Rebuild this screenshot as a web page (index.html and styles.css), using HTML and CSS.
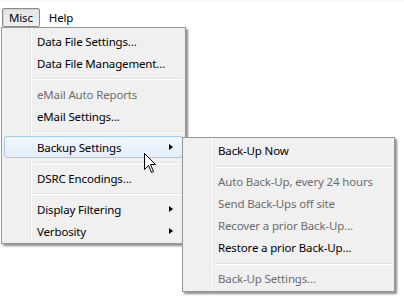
FILE: index.html
```html
<!DOCTYPE html>
<html>
<head>
<meta charset="utf-8">
<link rel="stylesheet" href="styles.css">
</head>
<body>
<div class="menubar">
  <span class="mb-item mb-open">Misc</span>
  <span class="mb-item">Help</span>
</div>

<div class="menu main-menu">
  <div class="item">Data File Settings...</div>
  <div class="item">Data File Management...</div>
  <div class="sep"></div>
  <div class="item disabled">eMail Auto Reports</div>
  <div class="item">eMail Settings...</div>
  <div class="sep"></div>
  <div class="item hot sub">Backup Settings</div>
  <div class="sep"></div>
  <div class="item">DSRC Encodings...</div>
  <div class="sep"></div>
  <div class="item sub">Display Filtering</div>
  <div class="item sub">Verbosity</div>
</div>

<div class="menu sub-menu">
  <div class="item">Back-Up Now</div>
  <div class="sep"></div>
  <div class="item disabled">Auto Back-Up, every 24 hours</div>
  <div class="item disabled">Send Back-Ups off site</div>
  <div class="item disabled">Recover a prior Back-Up...</div>
  <div class="item">Restore a prior Back-Up...</div>
  <div class="sep"></div>
  <div class="item disabled">Back-Up Settings...</div>
</div>

<svg class="cursor" width="14" height="21" viewBox="0 0 14 21">
  <path d="M0.5 0.5 L0.5 16.5 L4.5 12.5 L7.5 19.5 L9.5 18.5 L6.5 11.5 L11.5 11.5 Z" fill="#fff" stroke="#000" stroke-width="1" stroke-linejoin="miter"/>
</svg>
</body>
</html>
```

FILE: styles.css
```css
html, body {
  margin: 0;
  padding: 0;
  background: #ffffff;
  width: 404px;
  height: 300px;
  overflow: hidden;
  font-family: "Noto Sans", "Open Sans", sans-serif;
  font-size: 11.5px;
  letter-spacing: -0.15px;
  color: #000;
}

.menubar {
  height: 28px;
  display: flex;
  align-items: flex-end;
  padding-left: 2px;
  box-sizing: border-box;
  background: linear-gradient(#f4f4f4 0, #ffffff 3px, #ffffff 100%);
  gap: 2px;
}

.mb-item {
  height: 17px;
  line-height: 17px;
  padding: 0 6px;
  border: 1px solid transparent;
  margin-bottom: 1px;
}

.mb-open {
  border-color: #8a8a8a;
  border-radius: 2px;
  background: linear-gradient(#e4e4e4, #f0f0f0);
  box-shadow: inset 1px 1px 0 #d0d0d0;
}

.menu {
  position: absolute;
  border: 1px solid #979797;
  padding: 2px;
  background-color: #f0f0f0;
  background-repeat: no-repeat;
  box-shadow: 2px 2px 2px rgba(0, 0, 0, 0.45);
}

.main-menu {
  left: 1px;
  top: 27px;
  width: 179px;
  padding-bottom: 1px;
  background-image: linear-gradient(to right,
    transparent 28px, #e2e3e3 28px, #e2e3e3 29px,
    #ffffff 29px, #ffffff 30px, transparent 30px);
}

.sub-menu {
  left: 182px;
  top: 137px;
  width: 207px;
  padding-bottom: 1px;
  background-image: linear-gradient(to right,
    transparent 27px, #e2e3e3 27px, #e2e3e3 28px,
    #ffffff 28px, #ffffff 29px, transparent 29px);
}

.item {
  position: relative;
  height: 22px;
  line-height: 21px;
  padding-left: 32px;
  white-space: nowrap;
  box-sizing: border-box;
  border: 1px solid transparent;
  border-radius: 3px;
}

.sub-menu .item {
  line-height: 19px;
}

.item.disabled {
  color: #6d6d6d;
}

.item.hot {
  border-color: #a8c8ee;
  background: linear-gradient(#f3f7fd, #e3edfb);
}

.item.sub::after {
  content: "";
  position: absolute;
  right: 9px;
  top: 7px;
  border-left: 4px solid #000;
  border-top: 3.5px solid transparent;
  border-bottom: 3.5px solid transparent;
}

.sep {
  height: 9px;
  margin-left: 29px;
  background: linear-gradient(#e0e0e0, #e0e0e0) 0 4px / 100% 1px no-repeat,
              linear-gradient(#ffffff, #ffffff) 0 5px / 100% 1px no-repeat;
}

.cursor {
  position: absolute;
  left: 144px;
  top: 153px;
}
```
